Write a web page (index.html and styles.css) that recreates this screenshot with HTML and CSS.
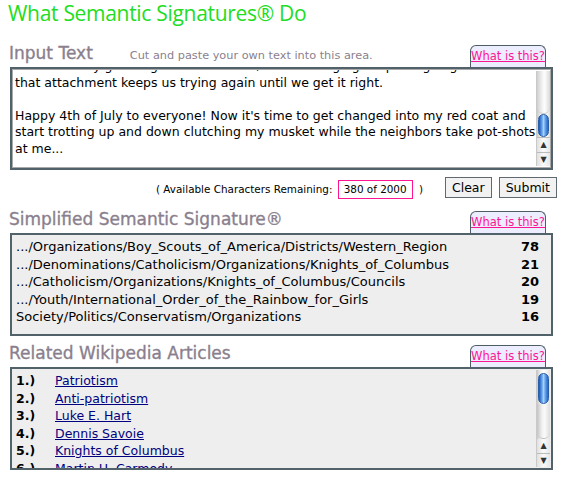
FILE: index.html
```html
<!DOCTYPE html>
<html>
<head>
<meta charset="utf-8">
<link rel="stylesheet" href="styles.css">
</head>
<body>
<div class="page">
  <h1 class="title">What Semantic Signatures® Do</h1>

  <div class="sec-head">
    <div class="sec-left">
      <h2 class="sec-title">Input Text</h2>
      <span class="hint">Cut and paste your own text into this area.</span>
    </div>
    <div class="tab"><a href="#">What is this?</a></div>
  </div>
  <div class="box input-box">
    <div class="input-inner">
      <div class="scroll-text">
        <div class="text-content">
          <p class="cut">and we rarely get it right the first time, but our longing keeps us going and</p>
          <p>that attachment keeps us trying again until we get it right.</p>
          <p class="gap">Happy 4th of July to everyone! Now it's time to get changed into my red coat and start trotting up and down clutching my musket while the neighbors take pot&#8209;shots at me...</p>
        </div>
      </div>
      <div class="sbar sbar-input">
        <div class="track-top"></div>
        <div class="thumb"></div>
        <div class="track-fill"></div>
        <div class="arrow up">▲</div>
        <div class="arrow down">▼</div>
      </div>
    </div>
  </div>

  <div class="controls">
    <span class="remain">( Available Characters Remaining: <span class="count">380 of 2000</span> )</span>
    <button class="btn">Clear</button>
    <button class="btn">Submit</button>
  </div>

  <div class="sec-head sig-head">
    <div class="sec-left">
      <h2 class="sec-title">Simplified Semantic Signature®</h2>
    </div>
    <div class="tab"><a href="#">What is this?</a></div>
  </div>
  <div class="box sig-box">
    <div class="sig-row"><span>.../Organizations/Boy_Scouts_of_America/Districts/Western_Region</span><b>78</b></div>
    <div class="sig-row"><span>.../Denominations/Catholicism/Organizations/Knights_of_Columbus</span><b>21</b></div>
    <div class="sig-row"><span>.../Catholicism/Organizations/Knights_of_Columbus/Councils</span><b>20</b></div>
    <div class="sig-row"><span>.../Youth/International_Order_of_the_Rainbow_for_Girls</span><b>19</b></div>
    <div class="sig-row"><span>Society/Politics/Conservatism/Organizations</span><b>16</b></div>
  </div>

  <div class="sec-head wiki-head">
    <div class="sec-left">
      <h2 class="sec-title">Related Wikipedia Articles</h2>
    </div>
    <div class="tab"><a href="#">What is this?</a></div>
  </div>
  <div class="box wiki-box">
    <ol class="wiki-list">
      <li><b>1.)</b><a href="#">Patriotism</a></li>
      <li><b>2.)</b><a href="#">Anti-patriotism</a></li>
      <li><b>3.)</b><a href="#">Luke E. Hart</a></li>
      <li><b>4.)</b><a href="#">Dennis Savoie</a></li>
      <li><b>5.)</b><a href="#">Knights of Columbus</a></li>
      <li><b>6.)</b><a href="#">Martin H. Carmody</a></li>
    </ol>
    <div class="sbar sbar-wiki">
      <div class="thumb"></div>
      <div class="track-fill"></div>
      <div class="arrow up">▲</div>
      <div class="arrow down">▼</div>
    </div>
  </div>
</div>
</body>
</html>
```

FILE: styles.css
```css
* { box-sizing: border-box; }
body {
  margin: 0;
  background: #fff;
  font-family: "DejaVu Sans", "Liberation Sans", sans-serif;
  color: #000;
}
.page {
  padding: 0 0 0 10px;
  width: 553px;
}
.title {
  margin: 0 0 0 -2px;
  padding-top: 0;
  height: 42px;
  font-family: "Open Sans", "DejaVu Sans", sans-serif;
  font-weight: 400;
  font-size: 21px;
  line-height: 27px;
  color: #22dd22;
  letter-spacing: -0.3px;
}
.sec-head {
  display: flex;
  justify-content: space-between;
  align-items: flex-end;
  height: 25px;
}
.sec-left {
  display: flex;
  align-items: baseline;
  align-self: flex-start;
}
.sec-title {
  margin: 0 0 0 -1px;
  font-size: 17px;
  font-weight: 400;
  line-height: 23px;
  color: #8a7f8e;
  -webkit-text-stroke: 0.35px #8a7f8e;
}
.hint {
  margin-left: 37px;
  font-size: 11.3px;
  color: #8a7f8e;
}
.tab {
  margin-right: 7px;
  width: 76px;
  height: 22px;
  background: #eceeff;
  border: 1px solid #4e5d64;
  border-bottom: none;
  border-radius: 6px 6px 0 0;
  text-align: center;
  padding-top: 3px;
  font-size: 11.5px;
  line-height: 14px;
}
.tab a { color: #ff1493; text-decoration: underline; }
.box {
  border: 2px solid #52626a;
  width: 543px;
}
.input-box {
  height: 103px;
  background: #fff;
}
.input-inner {
  display: flex;
  height: 100%;
  border: 1px solid #a9a9a9;
  margin: 0;
}
.scroll-text {
  flex: 1;
  overflow: hidden;
  padding-left: 2px;
}
.text-content {
  margin-top: -12px;
  font-size: 12.5px;
  line-height: 16.5px;
}
.text-content p { margin: 0; }
.text-content .cut { white-space: nowrap; overflow: hidden; }
.text-content .gap { margin-top: 16.5px; }
.sbar {
  width: 14px;
  display: flex;
  flex-direction: column;
  background: linear-gradient(90deg, #c8c8c8, #f4f4f4 30%, #fff 55%, #e2e2e2);
  border-left: 1px solid #c9c9c9;
}
.sbar-input { margin: 1px 0 1px 0; }
.track-top {
  height: 48px;
  border-radius: 0 0 7px 7px;
  background: linear-gradient(90deg,#d0d0d0,#f6f6f6 45%,#fdfdfd 60%,#d8d8d8);
  border-bottom: 1px solid #c4c4c4;
}
.thumb {
  height: 30px;
  margin: 0 1px;
  border-radius: 7px;
  border: 1px solid #2a5ea8;
  background: linear-gradient(90deg, #1c54b5 0%, #6aa8ef 35%, #a7d0fb 50%, #5497e6 75%, #2b65c2 100%);
}
.sbar-input .thumb { height: 25px; }
.track-fill {
  flex: 1;
  border-radius: 0 0 7px 7px;
  background: linear-gradient(90deg, #c4c4c4, #f2f2f2 40%, #fafafa 60%, #dcdcdc);
  border-bottom: 1px solid #bdbdbd;
}
.arrow {
  height: 14px;
  font-size: 8px;
  line-height: 14px;
  text-align: center;
  color: #333;
  background: linear-gradient(90deg, #e0e0e0, #fafafa 50%, #e6e6e6);
}
.arrow.down { border-top: 1px solid #bbb; }
.controls {
  display: flex;
  align-items: flex-start;
  justify-content: flex-end;
  height: 38px;
  padding-top: 7px;
  font-size: 10.4px;
  margin-right: -4px;
}
.remain { margin-right: 22px; padding-top: 3px; }
.count {
  display: inline-block;
  border: 1px solid #ff1493;
  padding: 2px 5px 3px 5px;
  margin: 0 3px 0 2px;
}
.btn {
  font-family: "DejaVu Sans", sans-serif;
  font-size: 12.5px;
  height: 21px;
  padding: 0 6px;
  margin-left: 7px;
  background: #f2f2f2;
  border: 1px solid #606870;
  border-radius: 0;
  color: #000;
}
.btn:first-of-type { margin-left: 0; }
.sig-box {
  height: 103px;
  background: #eeeeee;
  padding: 3px 12px 0 4px;
  font-size: 13px;
}
.sig-row {
  display: flex;
  justify-content: space-between;
  height: 17.5px;
  line-height: 17.5px;
}
.sig-row b { font-weight: 700; }
.wiki-head { margin-top: 6px; }
.wiki-box {
  height: 103px;
  background: #eeeeee;
  display: flex;
  overflow: hidden;
}
.wiki-list {
  flex: 1;
  list-style: none;
  margin: 0;
  padding: 3px 0 0 4px;
  font-size: 12.5px;
  overflow: hidden;
}
.wiki-list li {
  display: flex;
  height: 17.5px;
  line-height: 17.5px;
}
.wiki-list b { width: 39px; }
.wiki-list a { color: #000080; text-decoration: underline; }
.sbar-wiki { margin: 1px 1px 1px 0; }
.sbar-wiki .thumb { height: 31px; margin-top: 3px; }
```
